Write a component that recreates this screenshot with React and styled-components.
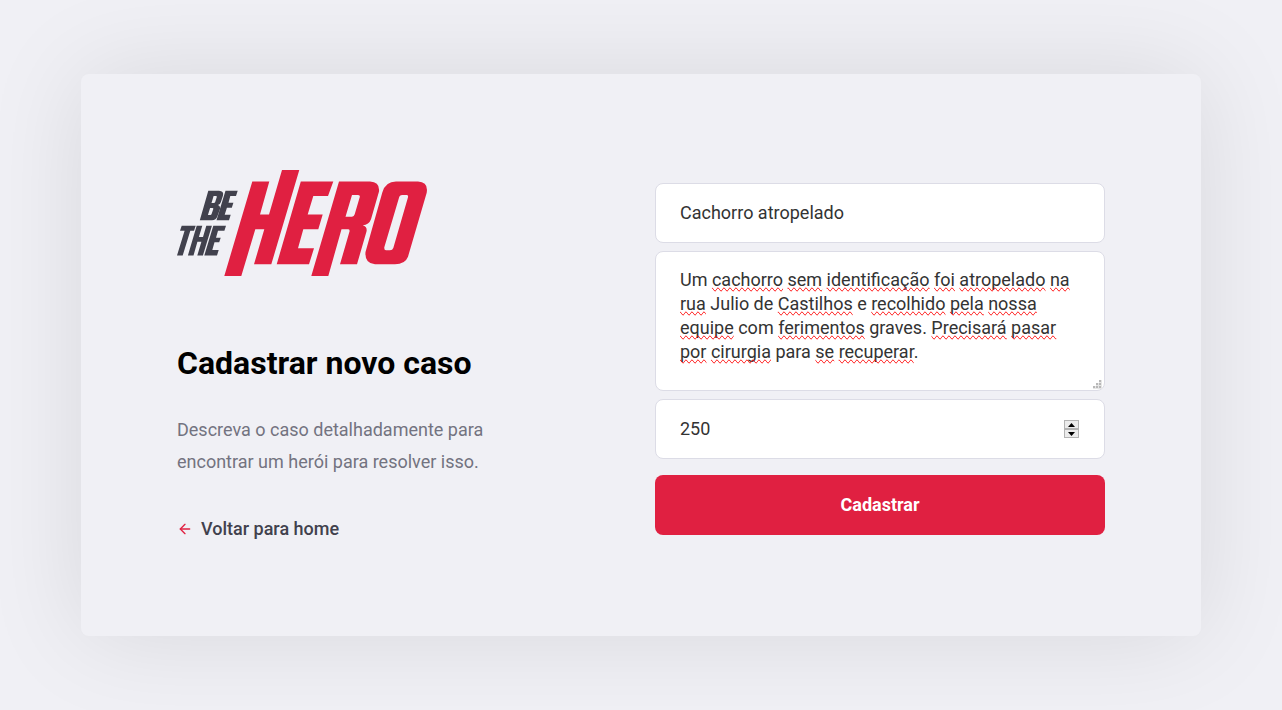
import React, { useState } from "react";
import styled, { createGlobalStyle, css } from "styled-components";
import { FiArrowLeft } from "react-icons/fi";

const GlobalStyle = createGlobalStyle`
  * {
    margin: 0;
    padding: 0;
    outline: 0;
    box-sizing: border-box;
  }

  body {
    font: 400 14px Roboto, sans-serif;
    background: #f0f0f5;
    -webkit-font-smoothing: antialiased;
  }

  input, button, textarea {
    font: 400 18px Roboto, sans-serif;
  }
`;

const Page = styled.main`
  width: 100%;
  max-width: 1120px;
  min-height: 100vh;
  margin: 0 auto;
  display: flex;
  align-items: center;
  justify-content: center;
`;

const Card = styled.div`
  width: 100%;
  padding: 96px;
  background: #f0f0f5;
  box-shadow: 0 0 100px rgba(0, 0, 0, 0.1);
  border-radius: 8px;
  display: flex;
  align-items: center;
  justify-content: space-between;
`;

const Intro = styled.section`
  width: 100%;
  max-width: 380px;
`;

const LogoImage = styled.svg`
  display: block;
  width: 250px;
  height: 106px;
`;

const Title = styled.h1`
  margin: 68px 0 32px;
  font-size: 32px;
  line-height: 38px;
`;

const Description = styled.p`
  font-size: 18px;
  line-height: 32px;
  color: #737380;
  max-width: 340px;
`;

const BackLink = styled.a`
  display: inline-flex;
  align-items: center;
  gap: 8px;
  margin-top: 40px;
  color: #41414d;
  font-size: 18px;
  line-height: 22px;
  font-weight: 500;
  text-decoration: none;
`;

const Form = styled.form`
  width: 100%;
  max-width: 450px;
  padding-top: 8px;
  display: flex;
  flex-direction: column;
  gap: 8px;
`;

const fieldBox = css`
  width: 100%;
  color: #333;
  border: 1px solid #dcdce6;
  border-radius: 8px;
`;

const TextInput = styled.input`
  ${fieldBox}
  display: block;
  height: 60px;
  padding: 0 24px 2px;
  background: #fff;
  appearance: textfield;

  &::-webkit-inner-spin-button {
    appearance: none;
  }
`;

const FieldWrap = styled.div`
  position: relative;
`;

const textLayout = css`
  padding: 16px 24px;
  font-size: 18px;
  line-height: 24px;
`;

const TextArea = styled.textarea`
  ${fieldBox}
  ${textLayout}
  display: block;
  height: 140px;
  min-height: 140px;
  background: #fff;
  resize: vertical;

  &::-webkit-resizer {
    background: transparent;
  }
`;

const SpellLayer = styled.div`
  ${textLayout}
  position: absolute;
  inset: 0;
  border: 1px solid transparent;
  color: transparent;
  pointer-events: none;
  user-select: none;
  white-space: pre-wrap;
`;

const Misspelled = styled.span`
  text-decoration-line: spelling-error;
`;

const Grip = styled.svg`
  position: absolute;
  right: 3px;
  bottom: 2px;
  pointer-events: none;
`;

const Stepper = styled.div`
  position: absolute;
  top: 0;
  bottom: 0;
  right: 26px;
  display: flex;
  flex-direction: column;
  justify-content: center;
`;

const StepButton = styled.button`
  width: 15px;
  height: 9px;
  display: flex;
  align-items: center;
  justify-content: center;
  border: 1px solid #b4b4b4;
  background: #ececec;
`;

const SubmitButton = styled.button`
  width: 100%;
  height: 60px;
  margin-top: 8px;
  padding-bottom: 2px;
  border: 0;
  border-radius: 8px;
  background: #e02041;
  color: #fff;
  font-weight: 700;
  cursor: pointer;
`;

const flagged = new Set(
  "cachorro sem identificação foi atropelado na rua Castilhos recolhido pela nossa equipe ferimentos Precisará pasar por cirurgia se recuperar".split(" ")
);

function Logo() {
  return (
    <LogoImage viewBox="0 0 250 106" role="img" aria-label="Be The Hero">
      <g fill="#e02041" fillRule="evenodd">
        <path d="M75.300 11.600H92.300L83 44.600H92L105 0H122.300L94.300 94.300H77L87.300 59.300H78.300L64.300 106H47.300Z" />
        <path d="M123.800 11.600H156.300L151 26H136.300L130.700 44.600H145.700L141.300 59.300H126.300L121 78.300H137L132 94.300H99.700Z" />
        <path d="M162 11.600H193Q203 12 202 21.600L194 49.300Q192 55 185.700 55.300Q190.500 56.500 189.500 61.500L180 94.300H163L172.500 61.600Q173 59.300 171 59.300H164.500L151.300 106H134.300Z M175 25H180.500Q183.500 25 182.700 27.300L177.700 44.300Q177 46.700 175 46.700H168.500Z" />
        <path d="M219 11.600H241Q251.500 12 249.700 22.700L231 86.700Q228 94.300 218 94.300H198Q187.500 93.500 188.500 82L205.300 22.500Q208.500 11.600 219 11.600Z M225 25Q223 25 222.300 26.700L207.300 77.300Q207 80.300 209 80.300H213Q215.500 80.300 216.300 78L231 27.300Q231.500 25 229.500 25Z" />
      </g>
      <g fill="#41414d" fillRule="evenodd">
        <path d="M31.300 20.700H42Q47 21 46 25.500L43.900 32Q43.200 34.500 41 35Q43.500 36 43 39L40.500 46Q39 50.300 35 50.300H22.800Z M36.600 26L34.500 33H36.800Q37.800 33 38.200 32L39.800 27Q40 26 39 26Z M33.100 38L30.900 45H33.200Q34.300 45 34.600 44L36.300 39Q36.500 38 35.500 38Z" />
        <path d="M48.500 20.700H60.700L59 26H53.300L51.500 32.700H56.400L54.800 37.700H49.900L47.700 44.700H53.700L52 50.300H39.500Z" />
        <path d="M4.700 55.700H18.700L17 60.700H13.300L5.700 85.500H0L7.600 60.700H3Z" />
        <path d="M19.700 55.700H25.300L21.900 67H26L29.300 55.700H34.900L25.900 85.500H20.300L24.400 71.700H20.400L16.500 85.500H10.900Z" />
        <path d="M36.300 55.700H49L47.400 60.700H41L39 67.700H43.700L42.200 72.300H37.500L35.300 80H41.700L40 85.500H27.300Z" />
      </g>
    </LogoImage>
  );
}

function SpellMarks({ text }) {
  return (
    <SpellLayer aria-hidden="true">
      {text.split(/([\s.,]+)/).map((part, i) =>
        flagged.has(part) ? <Misspelled key={i}>{part}</Misspelled> : part
      )}
    </SpellLayer>
  );
}

export default function App() {
  const [title, setTitle] = useState("Cachorro atropelado");
  const [description, setDescription] = useState(
    "Um cachorro sem identificação foi atropelado na rua Julio de Castilhos e recolhido pela nossa equipe com ferimentos graves. Precisará pasar por cirurgia para se recuperar."
  );
  const [value, setValue] = useState("250");
  const step = (n) => setValue((v) => String(Number(v) + n));

  return (
    <>
      <GlobalStyle />
      <Page>
        <Card>
          <Intro>
            <Logo />
            <Title>Cadastrar novo caso</Title>
            <Description>
              Descreva o caso detalhadamente para encontrar um herói para resolver isso.
            </Description>
            <BackLink href="#home">
              <FiArrowLeft size={16} color="#e02041" />
              Voltar para home
            </BackLink>
          </Intro>
          <Form onSubmit={(e) => e.preventDefault()}>
            <TextInput
              aria-label="Título do caso"
              value={title}
              onChange={(e) => setTitle(e.target.value)}
            />
            <FieldWrap>
              <TextArea
                aria-label="Descrição"
                spellCheck={false}
                value={description}
                onChange={(e) => setDescription(e.target.value)}
              />
              <SpellMarks text={description} />
              <Grip width="9" height="9" shapeRendering="crispEdges">
                <path fill="#e6e6e6" d="M6 0h3v9h-9v-3h3v-3h3z" />
                <path fill="#b8b8b8" d="M6 0h2v2h-2zM3 3h2v2h-2zM6 3h2v2h-2zM0 6h2v2h-2zM3 6h2v2h-2zM6 6h2v2h-2z" />
              </Grip>
            </FieldWrap>
            <FieldWrap>
              <TextInput
                type="number"
                aria-label="Valor em reais"
                value={value}
                onChange={(e) => setValue(e.target.value)}
              />
              <Stepper>
                <StepButton type="button" aria-label="Aumentar" onClick={() => step(1)}>
                  <svg width="7" height="4" viewBox="0 0 7 4"><path d="M0 4L3.500 0L7 4Z" /></svg>
                </StepButton>
                <StepButton type="button" aria-label="Diminuir" onClick={() => step(-1)}>
                  <svg width="7" height="4" viewBox="0 0 7 4"><path d="M0 0L3.500 4L7 0Z" /></svg>
                </StepButton>
              </Stepper>
            </FieldWrap>
            <SubmitButton type="submit">Cadastrar</SubmitButton>
          </Form>
        </Card>
      </Page>
    </>
  );
}
